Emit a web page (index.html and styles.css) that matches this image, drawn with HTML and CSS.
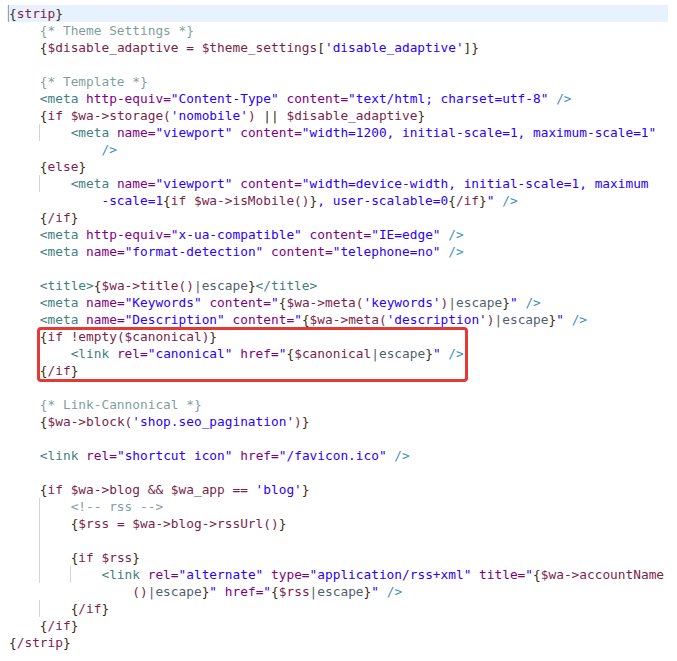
FILE: index.html
```html
<!DOCTYPE html>
<html>
<head>
<meta charset="utf-8">
<link rel="stylesheet" href="styles.css">
</head>
<body>
<div class="editor">
<div class="ln cur"><span class="caret"></span><span class="d">{</span><span class="k">strip</span><span class="d">}</span></div>
<div class="ln">    <span class="c">{* Theme Settings *}</span></div>
<div class="ln">    <span class="d">{</span><span class="k">$disable_adaptive = $theme_settings</span><span class="d">[</span><span class="s">'disable_adaptive'</span><span class="d">]}</span></div>
<div class="ln"> </div>
<div class="ln">    <span class="c">{* Template *}</span></div>
<div class="ln">    <span class="t">&lt;meta</span> <span class="a">http-equiv</span>=<span class="v">"Content-Type"</span> <span class="a">content</span>=<span class="v">"text/html; charset=utf-8"</span> <span class="e">/&gt;</span></div>
<div class="ln">    <span class="d">{</span><span class="k">if $wa-&gt;storage(</span><span class="s">'nomobile'</span><span class="k">)</span> <span class="d">||</span> <span class="k">$disable_adaptive</span><span class="d">}</span></div>
<div class="ln g1">        <span class="t">&lt;meta</span> <span class="a">name</span>=<span class="v">"viewport"</span> <span class="a">content</span>=<span class="v">"width=1200, initial-scale=1, maximum-scale=1"</span></div>
<div class="ln">            <span class="e">/&gt;</span></div>
<div class="ln">    <span class="d">{</span><span class="k">else</span><span class="d">}</span></div>
<div class="ln g1">        <span class="t">&lt;meta</span> <span class="a">name</span>=<span class="v">"viewport"</span> <span class="a">content</span>=<span class="v">"width=device-width, initial-scale=1, maximum</span></div>
<div class="ln">            <span class="v">-scale=1</span><span class="d">{</span><span class="k">if $wa-&gt;isMobile()</span><span class="d">}</span><span class="v">, user-scalable=0</span><span class="d">{</span><span class="k">/if</span><span class="d">}</span><span class="v">"</span> <span class="e">/&gt;</span></div>
<div class="ln">    <span class="d">{</span><span class="k">/if</span><span class="d">}</span></div>
<div class="ln">    <span class="t">&lt;meta</span> <span class="a">http-equiv</span>=<span class="v">"x-ua-compatible"</span> <span class="a">content</span>=<span class="v">"IE=edge"</span> <span class="e">/&gt;</span></div>
<div class="ln">    <span class="t">&lt;meta</span> <span class="a">name</span>=<span class="v">"format-detection"</span> <span class="a">content</span>=<span class="v">"telephone=no"</span> <span class="e">/&gt;</span></div>
<div class="ln"> </div>
<div class="ln">    <span class="t">&lt;title&gt;</span><span class="d">{</span><span class="k">$wa-&gt;title()</span><span class="m">|escape</span><span class="d">}</span><span class="t">&lt;/title&gt;</span></div>
<div class="ln">    <span class="t">&lt;meta</span> <span class="a">name</span>=<span class="v">"Keywords"</span> <span class="a">content</span>=<span class="v">"</span><span class="d">{</span><span class="k">$wa-&gt;meta(</span><span class="s">'keywords'</span><span class="k">)</span><span class="m">|escape</span><span class="d">}</span><span class="v">"</span> <span class="e">/&gt;</span></div>
<div class="ln">    <span class="t">&lt;meta</span> <span class="a">name</span>=<span class="v">"Description"</span> <span class="a">content</span>=<span class="v">"</span><span class="d">{</span><span class="k">$wa-&gt;meta(</span><span class="s">'description'</span><span class="k">)</span><span class="m">|escape</span><span class="d">}</span><span class="v">"</span> <span class="e">/&gt;</span></div>
<div class="mark">
<div class="ln">    <span class="d">{</span><span class="k">if !empty($canonical)</span><span class="d">}</span></div>
<div class="ln">        <span class="t">&lt;link</span> <span class="a">rel</span>=<span class="v">"canonical"</span> <span class="a">href</span>=<span class="v">"</span><span class="d">{</span><span class="k">$canonical</span><span class="m">|escape</span><span class="d">}</span><span class="v">"</span> <span class="e">/&gt;</span></div>
<div class="ln">    <span class="d">{</span><span class="k">/if</span><span class="d">}</span></div>
</div>
<div class="ln"> </div>
<div class="ln">    <span class="c">{* Link-Cannonical *}</span></div>
<div class="ln">    <span class="d">{</span><span class="k">$wa-&gt;block(</span><span class="s">'shop.seo_pagination'</span><span class="k">)</span><span class="d">}</span></div>
<div class="ln"> </div>
<div class="ln">    <span class="t">&lt;link</span> <span class="a">rel</span>=<span class="v">"shortcut icon"</span> <span class="a">href</span>=<span class="v">"/favicon.ico"</span> <span class="e">/&gt;</span></div>
<div class="ln"> </div>
<div class="ln">    <span class="d">{</span><span class="k">if $wa-&gt;blog &amp;&amp; $wa_app == </span><span class="s">'blog'</span><span class="d">}</span></div>
<div class="ln g1">        <span class="c">&lt;!-- rss --&gt;</span></div>
<div class="ln g1">        <span class="d">{</span><span class="k">$rss = $wa-&gt;blog-&gt;rssUrl()</span><span class="d">}</span></div>
<div class="ln g1"> </div>
<div class="ln g1">        <span class="d">{</span><span class="k">if $rss</span><span class="d">}</span></div>
<div class="ln g2">            <span class="t">&lt;link</span> <span class="a">rel</span>=<span class="v">"alternate"</span> <span class="a">type</span>=<span class="v">"application/rss+xml"</span> <span class="a">title</span>=<span class="v">"</span><span class="d">{</span><span class="k">$wa-&gt;accountName</span></div>
<div class="ln">                <span class="k">()</span><span class="m">|escape</span><span class="d">}</span><span class="v">"</span> <span class="a">href</span>=<span class="v">"</span><span class="d">{</span><span class="k">$rss</span><span class="m">|escape</span><span class="d">}</span><span class="v">"</span> <span class="e">/&gt;</span></div>
<div class="ln g1">        <span class="d">{</span><span class="k">/if</span><span class="d">}</span></div>
<div class="ln">    <span class="d">{</span><span class="k">/if</span><span class="d">}</span></div>
<div class="ln"><span class="d">{</span><span class="k">/strip</span><span class="d">}</span></div>
</div>
</body>
</html>
```
FILE: styles.css
```css
html, body {
  margin: 0;
  padding: 0;
  background: #ffffff;
}
.editor {
  padding: 5px 0 0 9px;
  width: 659px;
  font-family: "DejaVu Sans Mono", monospace;
  font-size: 12.8px;
  color: #3a2a2a;
}
.ln {
  height: 17px;
  line-height: 17px;
  white-space: pre;
  color: #7f007f;
}
.cur {
  background: #e8f2fe;
  margin-left: -2px;
  padding-left: 2px;
}
.caret {
  display: inline-block;
  width: 1px;
  height: 17px;
  margin-left: -1px;
  background: #a0a0a0;
  vertical-align: top;
}
.g1 {
  background-image: linear-gradient(#d4d4d4, #d4d4d4);
  background-repeat: no-repeat;
  background-size: 1px 100%;
  background-position: 30px 0;
}
.g2 {
  background-image: linear-gradient(#d4d4d4, #d4d4d4), linear-gradient(#d4d4d4, #d4d4d4);
  background-repeat: no-repeat, no-repeat;
  background-size: 1px 100%, 1px 100%;
  background-position: 30px 0, 61px 0;
}
.d { color: #3b2a10; }
.k { color: #7a1f4a; }
.s { color: #2a00ff; }
.c { color: #7f9f9f; }
.t { color: #3f7f7f; }
.a { color: #7f007f; }
.v { color: #2a00ff; }
.e { color: #3f8fbf; }
.m { color: #4f5f6f; }
.mark {
  position: relative;
}
.mark::after {
  content: "";
  position: absolute;
  left: 28px;
  top: -1px;
  width: 425px;
  height: 49px;
  border: 3px solid #e53935;
  border-radius: 4px;
}
```
